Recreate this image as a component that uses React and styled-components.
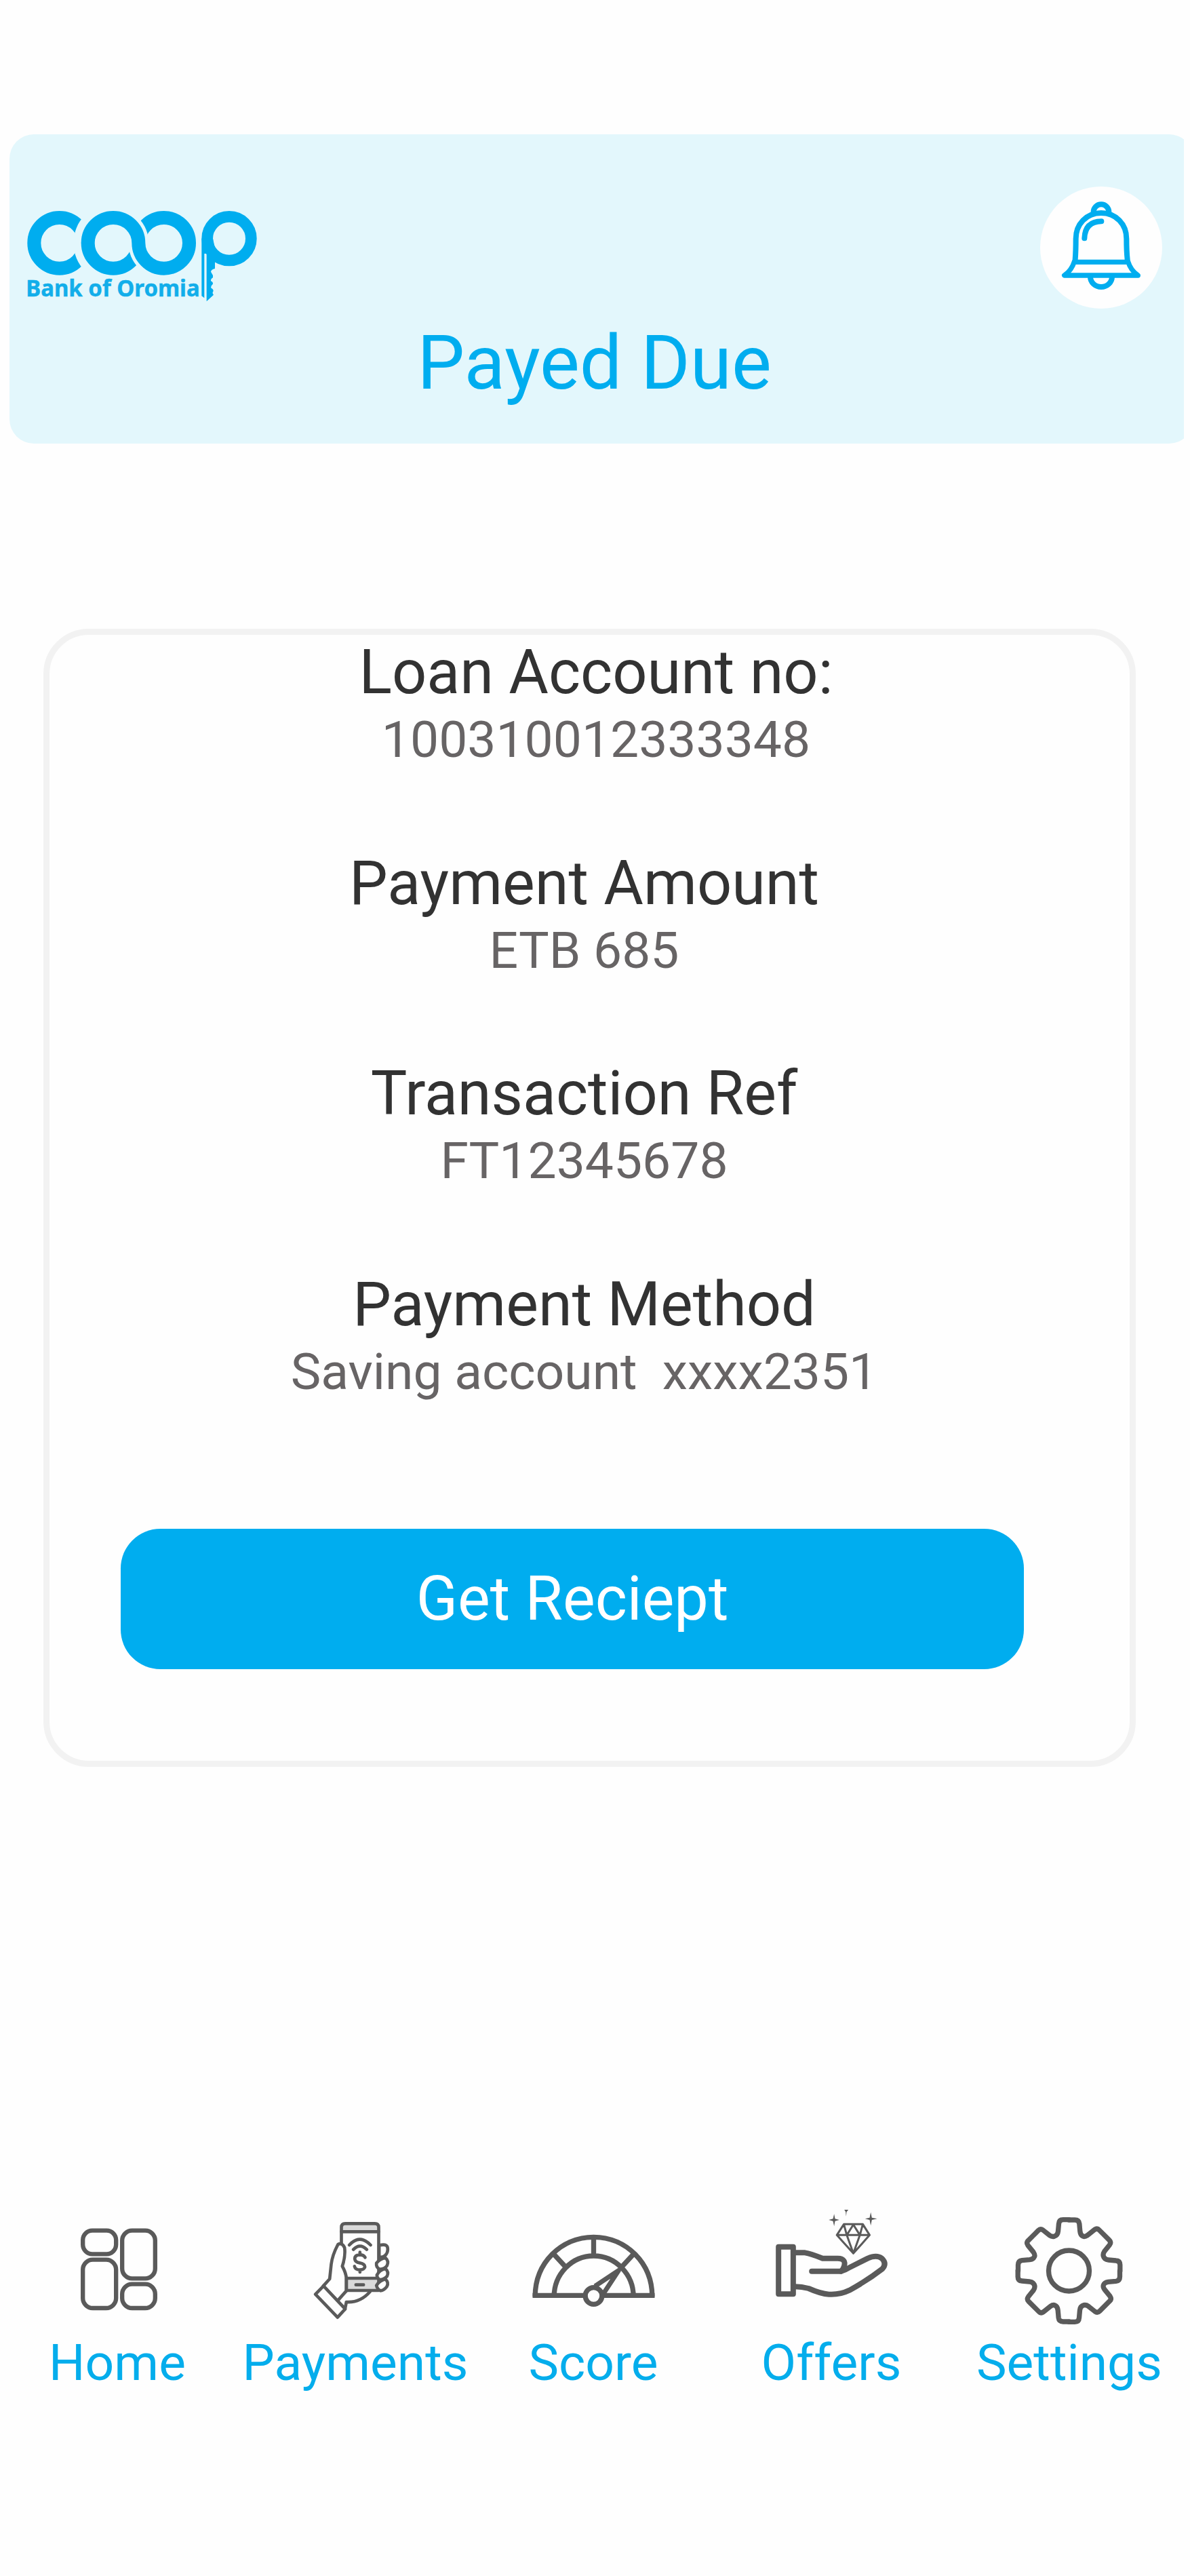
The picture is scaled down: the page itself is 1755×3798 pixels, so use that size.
import React from 'react';
import styled, { createGlobalStyle } from 'styled-components';

const Global = createGlobalStyle`
  * { box-sizing: border-box; }
  body { margin: 0; background: #fefefe; font-family: Roboto, "Liberation Sans", sans-serif; }
  svg { display: block; }
`;

const BLUE = '#00adef';
const GREY = '#5a5a5a';

const Screen = styled.div`
  width: 1755px;
  height: 3798px;
  display: flex;
  flex-direction: column;
  padding-top: 198px;
  overflow: hidden;
`;

const HeaderClip = styled.div`
  width: 1732px;
  height: 456px;
  margin-left: 14px;
  overflow: hidden;
`;

const Header = styled.header`
  width: 1746px;
  height: 100%;
  border-radius: 36px;
  background: #e3f7fc;
`;

const HeaderRow = styled.div`
  display: flex;
  justify-content: space-between;
  align-items: flex-start;
  width: 1700px;
  height: 269px;
  padding-top: 77px;
`;

const LogoSlot = styled.div`
  margin: 5px 0 0 -14px;
`;

const BellButton = styled.button`
  width: 180px;
  height: 180px;
  padding: 0;
  border: 0;
  border-radius: 50%;
  background: #fefefe;
`;

const Title = styled.h1`
  width: 1725px;
  margin: 0;
  text-align: center;
  font-size: 111px;
  line-height: 136px;
  font-weight: 400;
  color: ${BLUE};
`;

const Card = styled.main`
  width: 1611px;
  height: 1678px;
  margin: 273px 0 0 64px;
  border: 9px solid #f2f2f2;
  border-radius: 67px;
`;

const Field = styled.section`
  width: 1593px;
  height: 310.5px;
  padding-left: ${(p) => (p.$wide ? 19 : 0)}px;
  padding-right: ${(p) => (p.$wide ? 0 : 16)}px;
  text-align: center;
  white-space: pre;
`;

const Label = styled.div`
  padding-top: 2px;
  font-size: 90px;
  line-height: 108px;
  color: #323232;
`;

const Value = styled.div`
  font-size: 75px;
  line-height: 88px;
  color: #676465;
`;

const Action = styled.button`
  display: flex;
  align-items: center;
  justify-content: center;
  width: 1332px;
  height: 207px;
  margin: 76px 0 0 105px;
  padding: 0;
  border: 0;
  border-radius: 58.5px;
  background: ${BLUE};
  color: #fff;
  font: 400 90px Roboto, sans-serif;
`;

const Nav = styled.nav`
  display: grid;
  grid-template-columns: repeat(5, 351px);
  margin-top: 635px;
`;

const NavItem = styled.a`
  display: flex;
  flex-direction: column;
  align-items: center;
`;

const NavLabel = styled.span`
  margin-right: 5px;
  font-size: 75px;
  line-height: 86px;
  color: #04adec;
`;

function Logo() {
  return (
    <svg width="420" height="180" viewBox="0 0 1260 540">
      <defs>
        <mask id="cutC" maskUnits="userSpaceOnUse" x="0" y="0" width="1260" height="540">
          <rect width="1260" height="540" fill="#fff" />
          <circle cx="501" cy="235" r="176" fill="#000" />
        </mask>
        <mask id="cutLeft" maskUnits="userSpaceOnUse" x="0" y="0" width="1260" height="540">
          <rect width="1260" height="540" fill="#fff" />
          <circle cx="725" cy="235" r="157" fill="#000" />
        </mask>
        <mask id="cutRight" maskUnits="userSpaceOnUse" x="0" y="0" width="1260" height="540">
          <rect width="1260" height="540" fill="#fff" />
          <circle cx="501" cy="235" r="157" fill="#000" />
        </mask>
      </defs>
      <g fill="none" stroke={BLUE} strokeWidth="60">
        <circle cx="263" cy="235" r="112" mask="url(#cutC)" />
        <path d="M389 233V235A112 112 0 0 0 613 235" mask="url(#cutLeft)" />
        <path d="M389 235A112 112 0 0 1 613 235A112 112 0 0 0 837 235" />
        <path d="M837 237V235A112 112 0 0 0 613 235" mask="url(#cutRight)" />
        <circle cx="1014" cy="215" r="97" strokeWidth="50" />
      </g>
      <path
        fill={BLUE}
        d="M892 215H942L960 300L951 320V348Q935 352 933 362Q940 374 942 378V388Q932 394 933 403Q942 406 942 416Q932 424 934 434Q944 437 944 448Q937 456 945 464L914 493V282H904V478L892 469Z"
      />
      <text
        x="115"
        y="470"
        fontFamily="Noto Sans, Open Sans, sans-serif"
        fontWeight="700"
        fontSize="102"
        textLength="769"
        lengthAdjust="spacingAndGlyphs"
        fill="#12aeea"
        stroke="#12aeea"
        strokeWidth="1.5"
      >
        Bank of Oromia
      </text>
    </svg>
  );
}

function Bell() {
  return (
    <svg width="180" height="180" viewBox="102 285 540 540" fill="none" stroke={BLUE} strokeWidth="24" strokeLinecap="round" strokeLinejoin="round">
      <path d="M338 398A34 34 0 0 1 406 398" />
      <path d="M257 608Q260 570 260 516C260 452 306 402 372 402S484 452 484 516Q484 570 488 608" />
      <path d="M262 619H484" strokeWidth="22" />
      <path d="M254 615Q241 657 209 678H535Q503 657 490 615" strokeWidth="22" />
      <path d="M324 684A48 45 0 0 0 420 684" />
      <path d="M298 514Q301 440 373 439" />
    </svg>
  );
}

const line = { fill: 'none', stroke: GREY, strokeLinecap: 'round', strokeLinejoin: 'round' };

function HomeIcon() {
  return (
    <svg width="200" height="200" viewBox="-13.5 0 600 600" {...line} strokeWidth="19">
      <rect x="125" y="146" width="147" height="104" rx="42" />
      <rect x="125" y="275" width="147" height="214" rx="44" />
      <rect x="299" y="146" width="146" height="212" rx="44" />
      <rect x="299" y="383" width="146" height="106" rx="44" />
    </svg>
  );
}

function PaymentsIcon() {
  return (
    <svg width="200" height="200" viewBox="-10.5 0 600 600" {...line} strokeWidth="14">
      <path d="M219 151V132Q219 115 236 115H367Q384 115 384 132V151ZM241 357H384V411H241Z" fill="#dadada" />
      <path d="M219 205V151M384 151V357" />
      <path d="M254 210Q300 160 348 210M272 230Q301 200 331 230M283 386H317" />
      <path d="M324 265Q318 253 300 253Q278 254 278 271Q280 286 300 289Q323 293 323 307Q320 320 300 320Q280 319 277 304M301 242V252M301 321V330" />
      <path d="M388 211C416 205 425 212 424 231C423 251 407 266 391 263M386 211V270" />
      <g fill="#fefefe">
        <path d="M374 290Q390 270 414 267Q430 281 421 301Q409 320 386 316Q372 307 374 290Z" />
        <path d="M376 343Q387 320 414 315Q430 329 421 348Q408 364 387 363Q376 356 376 343Z" />
        <path d="M374 389Q388 367 414 361Q430 376 420 394Q406 412 391 412Q377 404 374 389Z" />
      </g>
      <path d="M241 411V357Q239 333 223 304Q238 258 233 222Q222 197 204 207Q179 254 174 295L167 360L139 391M207 451L241 413" />
      <path d="M140 391L104 428L202 530L236 493ZM235 493L241 462Q302 466 345 417" />
    </svg>
  );
}

function ScoreIcon() {
  return (
    <svg width="200" height="200" viewBox="52.5 0 600 600" {...line} strokeLinecap="butt" strokeWidth="22">
      <path d="M75 433H303M387 433H615" />
      <path d="M86 438C86 290 201 175 345 175S604 290 604 438" />
      <path d="M170 438C170 340 247 258 345 258S521 340 521 438M345 180V252M168 250L222 308M522 250L468 308" />
      <circle cx="345" cy="435" r="37" />
      <path d="M351 392L456 322L389 424" strokeWidth="21" />
    </svg>
  );
}

function OffersIcon() {
  return (
    <svg width="200" height="200" viewBox="25.5 0 600 600" {...line} strokeWidth="24">
      <rect x="83" y="218" width="65" height="209" />
      <path d="M154 244H200Q225 248 278 269H345C374 269 378 286 374 301Q371 315 360 326H230" />
      <path d="M360 326Q381 320 398 309L478 269Q517 252 540 269Q563 291 543 315Q480 364 397 410Q354 431 306 428Q270 426 216 402Q186 394 154 394" />
      <path d="M372 118H456L486 166L414 247L341 166ZM341 166H486M372 118L385 166L414 120L443 166L456 118M385 166L414 247L443 166" strokeWidth="9" />
      <g fill={GREY} stroke="none">
        <path d="M329 73L333 94L352 99L333 104L329 127L324 104L305 99L324 94Z" />
        <path d="M491 65L496 89L519 94L496 99L491 124L486 99L466 94L486 89Z" />
        <path d="M374 54H392L384 64L382 83L380 63Z" />
      </g>
    </svg>
  );
}

const toothPath =
  'M0-226H-26Q-44-226-45-208L-48-175Q-50-156-66-152Q-76-150-86-157L-115-180Q-126-188-136-178L-180-134Q-190-125-182-113L-157-82Q-149-70-153-62Q-157-51-174-49L-208-46Q-225-44-225-26V0';

function SettingsIcon() {
  return (
    <svg width="200" height="200" viewBox="28.5 0 600 600" {...line} strokeWidth="22">
      <g transform="translate(318 324)">
        {[0, 90, 180, 270].map((a) => (
          <path key={a} d={toothPath} transform={`rotate(${a})`} />
        ))}
        <circle r="90" />
      </g>
    </svg>
  );
}

const fields = [
  { label: 'Loan Account no:', value: '100310012333348', wide: true },
  { label: 'Payment Amount', value: 'ETB 685' },
  { label: 'Transaction Ref', value: 'FT12345678' },
  { label: 'Payment Method', value: 'Saving account  xxxx2351' },
];

const tabs = [
  ['Home', HomeIcon],
  ['Payments', PaymentsIcon],
  ['Score', ScoreIcon],
  ['Offers', OffersIcon],
  ['Settings', SettingsIcon],
];

export default function App() {
  return (
    <Screen>
      <Global />
      <HeaderClip>
        <Header>
          <HeaderRow>
            <LogoSlot>
              <Logo />
            </LogoSlot>
            <BellButton aria-label="Notifications">
              <Bell />
            </BellButton>
          </HeaderRow>
          <Title>Payed Due</Title>
        </Header>
      </HeaderClip>
      <Card>
        {fields.map((f) => (
          <Field key={f.label} $wide={f.wide}>
            <Label>{f.label}</Label>
            <Value>{f.value}</Value>
          </Field>
        ))}
        <Action>Get Reciept</Action>
      </Card>
      <Nav>
        {tabs.map(([name, Icon]) => (
          <NavItem key={name}>
            <Icon />
            <NavLabel>{name}</NavLabel>
          </NavItem>
        ))}
      </Nav>
    </Screen>
  );
}
